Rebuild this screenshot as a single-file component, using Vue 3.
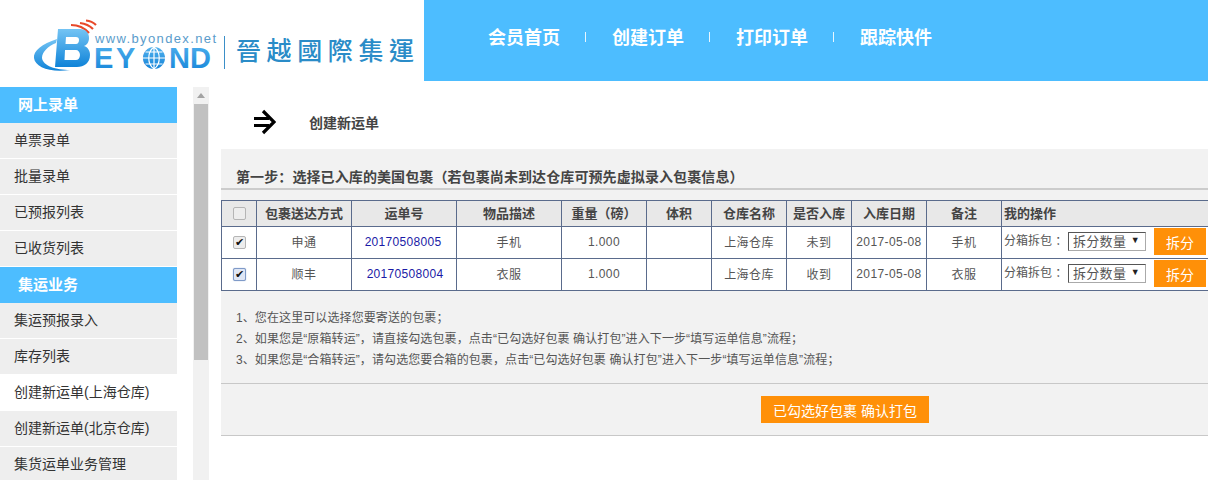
<script setup>
const nav = ['会员首页', '创建订单', '打印订单', '跟踪快件']
const groups = [
  { title: '网上录单', items: ['单票录单', '批量录单', '已预报列表', '已收货列表'] },
  { title: '集运业务', items: ['集运预报录入', '库存列表', '创建新运单(上海仓库)', '创建新运单(北京仓库)', '集货运单业务管理'] }
]
const heads = ['包裹送达方式', '运单号', '物品描述', '重量（磅）', '体积', '仓库名称', '是否入库', '入库日期', '备注']
const rows = [
  { way: '申通', no: '20170508005', desc: '手机', w: '1.000', st: '未到', date: '2017-05-08', focus: false, cls: 'no-a' },
  { way: '顺丰', no: '20170508004', desc: '衣服', w: '1.000', st: '收到', date: '2017-05-08', focus: true, cls: 'no-b' }
]
const notes = [
  '1、您在这里可以选择您要寄送的包裹；',
  '2、如果您是“原箱转运”，请直接勾选包裹，点击“已勾选好包裹 确认打包”进入下一步“填写运单信息”流程；',
  '3、如果您是“合箱转运”，请勾选您要合箱的包裹，点击“已勾选好包裹 确认打包”进入下一步“填写运单信息”流程；'
]
</script>

<template>
  <div class="page">
    <header class="top">
      <div class="logo">
        <svg class="mark" width="190" height="60" viewBox="0 0 190 60">
          <defs>
            <linearGradient id="bg" x1="0" y1="0" x2="0" y2="1">
              <stop offset="0" stop-color="#74c4f4" />
              <stop offset="1" stop-color="#0f83d8" />
            </linearGradient>
            <linearGradient id="tg" x1="0" y1="0" x2="0" y2="1">
              <stop offset="0" stop-color="#52b2ee" />
              <stop offset="1" stop-color="#1283d8" />
            </linearGradient>
          </defs>
          <path d="M41 10 Q52 10 59 18 M50 8 Q58 9 63 14 M56 5.5 Q62 6 66 10" fill="none" stroke="#e8492a" stroke-width="2.2" />
          <path d="M27 24 C12 29 3 36 4 43 C5 52 20 58 40 55 C26 55 13 51 12 43 C12 37 18 31 26 28 Z" fill="url(#bg)" />
          <path d="M28 14 H50 C56 14 59 18 59 23 C59 27 57 30 54 31 C58 32 60 36 60 40 C60 48 54 52 47 52 H25 Z M36 22 L35.500 29 H46 C48 29 49 27 49 25 C49 23 48 22 46 22 Z M35 35 L34.500 45 H46 C48 45 50 43 50 40 C50 37 48 35 46 35 Z" fill="url(#bg)" fill-rule="evenodd" />
          <text x="65" y="28" class="url" textLength="121">www.byondex.net</text>
          <text x="64 86 112 139 160" y="53" class="brand">EYOND</text>
          <circle cx="124" cy="43" r="11" fill="url(#tg)" />
          <path d="M113 43H135 M124 32V54 M124 32C117 37 117 49 124 54 M124 32C131 37 131 49 124 54 M115.500 37H132.500 M115.500 49H132.500" fill="none" stroke="#fff" stroke-width="1.200" />
        </svg>
        <span class="rule"></span>
        <span class="cn">晉越國際集運</span>
      </div>
      <nav class="nav">
        <template v-for="(n, i) in nav" :key="n">
          <i v-if="i" class="tick"></i>
          <a class="nav-item">{{ n }}</a>
        </template>
      </nav>
    </header>

    <main class="body">
      <aside class="side">
        <template v-for="g in groups" :key="g.title">
          <div class="side-head">{{ g.title }}</div>
          <div v-for="it in g.items" :key="it" class="side-item" :class="{ on: it === '创建新运单(上海仓库)' }">{{ it }}</div>
        </template>
      </aside>

      <div class="scroll">
        <div class="arrow"></div>
        <div class="thumb"></div>
      </div>

      <section class="content">
        <div class="title">
          <svg class="go" width="24" height="26" viewBox="0 0 24 26">
            <rect x="2" y="8" width="15" height="3" fill="#000" />
            <rect x="2" y="15" width="15" height="3" fill="#000" />
            <path d="M11 2L22 13L11 24" fill="none" stroke="#000" stroke-width="3.200" />
          </svg>
          <span>创建新运单</span>
        </div>

        <div class="panel">
          <h2 class="step">第一步：选择已入库的美国包裹（若包裹尚未到达仓库可预先虚拟录入包裹信息）</h2>
          <table class="grid">
            <colgroup>
              <col class="c0" /><col class="c1" /><col class="c2" /><col class="c3" /><col class="c4" />
              <col class="c5" /><col class="c6" /><col class="c7" /><col class="c8" /><col class="c9" /><col class="c10" />
            </colgroup>
            <thead>
              <tr>
                <th><span class="box"></span></th>
                <th v-for="h in heads" :key="h">{{ h }}</th>
                <th class="left">我的操作</th>
              </tr>
            </thead>
            <tbody>
              <tr v-for="r in rows" :key="r.no">
                <td><span class="box checked" :class="{ focus: r.focus }">✔</span></td>
                <td>{{ r.way }}</td>
                <td class="no" :class="r.cls">{{ r.no }}</td>
                <td>{{ r.desc }}</td>
                <td>{{ r.w }}</td>
                <td></td>
                <td>上海仓库</td>
                <td>{{ r.st }}</td>
                <td>{{ r.date }}</td>
                <td>{{ r.desc }}</td>
                <td class="left ops">
                  <span class="ops-label">分箱拆包&nbsp;：</span>
                  <span class="select">拆分数量<b>▼</b></span>
                  <button class="split">拆分</button>
                </td>
              </tr>
            </tbody>
          </table>
          <ul class="notes">
            <li v-for="n in notes" :key="n">{{ n }}</li>
          </ul>
          <div class="actions">
            <button class="confirm">已勾选好包裹 确认打包</button>
          </div>
        </div>
      </section>
    </main>
  </div>
</template>

<style>
html, body { margin: 0; overflow: hidden; background: #fff; }
</style>

<style scoped>
.page {
  width: 1208px;
  height: 480px;
  overflow: hidden;
  font-family: "Liberation Sans", "Noto Sans CJK SC", sans-serif;
  color: #333;
}
.top { display: flex; height: 81px; }
.logo {
  width: 424px;
  display: flex;
  align-items: flex-start;
  box-sizing: border-box;
  padding: 15px 0 0 30px;
}
.mark { display: block; flex: none; }
.url { font: 13px "Liberation Sans", sans-serif; fill: #5a9ccb; }
.brand { font: bold 29px "Liberation Sans", sans-serif; fill: url(#tg); }
.rule { width: 1px; height: 33px; background: #3b8fc8; margin: 21px 0 0 4px; flex: none; }
.cn {
  margin: 17px 0 0 11px;
  font-size: 25px;
  line-height: 34px;
  letter-spacing: 5.600px;
  color: #2a8cc8;
  font-family: "Noto Sans CJK TC", sans-serif;
  font-weight: 500;
  white-space: nowrap;
}
.nav {
  flex: 1;
  background: #4dbdff;
  display: flex;
  align-items: center;
  padding: 0 0 7px 64px;
  box-sizing: border-box;
}
.nav-item { color: #fff; font-size: 18px; font-weight: 700; line-height: 26px; position: relative; top: 1px; }
.tick { width: 1px; height: 10px; background: #e8f6ff; margin: 0 26px 0 25px; }

.body { display: flex; margin-top: 6px; }
.side { width: 177px; flex: none; }
.side-head {
  height: 36px;
  line-height: 35px;
  background: #4dbdff;
  color: #fff;
  font-size: 15px;
  font-weight: 700;
  padding-left: 18px;
}
.side-item {
  height: 35px;
  line-height: 35px;
  margin-bottom: 1px;
  background: #eee;
  font-size: 14px;
  padding-left: 14px;
  color: #333;
  white-space: nowrap;
}
.side-item.on { background: #fff; }

.scroll { width: 16px; height: 393px; margin-left: 16px; background: #f1f1f1; flex: none; }
.arrow { height: 17px; position: relative; }
.arrow::after {
  content: "";
  position: absolute;
  left: 4px;
  top: 6px;
  border: 4px solid transparent;
  border-top: 0;
  border-bottom: 5px solid #a3a3a3;
}
.thumb { height: 256px; margin: 0 1px; background: #c1c1c1; }

.content { flex: none; width: 987px; margin-left: 12px; }
.title {
  height: 62px;
  box-sizing: border-box;
  padding: 8px 0 0 31px;
  display: flex;
  align-items: center;
  font-size: 14px;
  font-weight: 700;
  color: #444;
}
.go { margin-right: 33px; flex: none; }
.panel { background: #f2f2f2; }
.step {
  margin: 0;
  height: 41px;
  box-sizing: border-box;
  padding: 18px 0 0 15px;
  font-size: 14px;
  line-height: 20px;
  font-weight: 700;
  letter-spacing: 0.100px;
  color: #444;
  border-bottom: 2px solid #ccc;
  white-space: nowrap;
}
.grid {
  display: table;
  width: 987px;
  table-layout: fixed;
  border-collapse: collapse;
  margin-top: 10px;
  font-size: 12px;
  background: #fff;
  color: #555;
  border-top: 1px solid #5a6b8c;
  position: relative;
}
.c0 { width: 35px; } .c1 { width: 95px; } .c2 { width: 105px; } .c3 { width: 105px; }
.c4 { width: 85px; } .c5 { width: 65px; } .c6 { width: 75px; } .c7 { width: 65px; }
.c8 { width: 75px; } .c9 { width: 75px; } .c10 { width: 207px; }
th, td {
  border: 1px solid #5a6b8c;
  text-align: center;
  padding: 0 0 2px;
  white-space: nowrap;
  overflow: hidden;
}
th { height: 23px; background: #e8e8e8; color: #444; font-weight: 700; font-size: 13px; }
td { height: 29px; font-size: 12px; letter-spacing: 0.400px; }
th.left, td.left { text-align: left; padding-left: 2px; }
td.ops { padding-bottom: 0; height: 31px; letter-spacing: 0; }
td.no { color: #1a1aa6; letter-spacing: 0.300px; }
td.no-a { padding-right: 2px; }
td.no-b { padding-left: 2px; }
.box {
  display: inline-block;
  box-sizing: border-box;
  width: 13px;
  height: 13px;
  border: 1px solid #b5b5b5;
  border-radius: 2px;
  background: #ededed;
  vertical-align: middle;
  font-size: 11px;
  line-height: 11px;
  letter-spacing: 0;
  color: #111;
  text-align: center;
}
.box.focus { border-color: #7f9ac8; background: #dfe6f4; box-shadow: 0 0 1px #7f9ac8; }
.ops-label { display: inline-block; width: 64px; font-size: 12px; color: #555; position: relative; top: -1px; }
.select {
  display: inline-block;
  box-sizing: border-box;
  width: 78px;
  height: 19px;
  line-height: 17px;
  font-size: 13px;
  letter-spacing: 0.300px;
  padding-left: 4px;
  background: #fff;
  border: 1px solid #aaa;
  border-left-color: #555;
  border-top-color: #555;
  color: #555;
  position: relative;
  top: -1px;
  vertical-align: middle;
}
.select b {
  position: absolute;
  right: 5px;
  top: -1px;
  font-size: 9px;
  font-weight: 400;
  color: #222;
}
.split {
  width: 52px;
  height: 27px;
  margin-left: 8px;
  border: 0;
  padding: 0;
  background: #ff9008;
  color: #fff;
  font: 14px "Liberation Sans", "Noto Sans CJK SC", sans-serif;
  vertical-align: middle;
  position: relative;
  top: -1px;
}
.notes {
  list-style: none;
  margin: 0;
  padding: 17px 0 13px 15px;
  font-size: 12px;
  line-height: 21px;
  letter-spacing: 0.100px;
  color: #555;
  border-bottom: 1px solid #c8c8c8;
  height: 93px;
  box-sizing: border-box;
}
.actions {
  height: 52px;
  box-sizing: border-box;
  padding: 12px 0 0 540px;
  border-bottom: 1px solid #c8c8c8;
}
.confirm {
  display: block;
  width: 168px;
  height: 27px;
  border: 0;
  padding: 0;
  background: #ff9008;
  color: #fff;
  font: 14px "Liberation Sans", "Noto Sans CJK SC", sans-serif;
}
</style>
